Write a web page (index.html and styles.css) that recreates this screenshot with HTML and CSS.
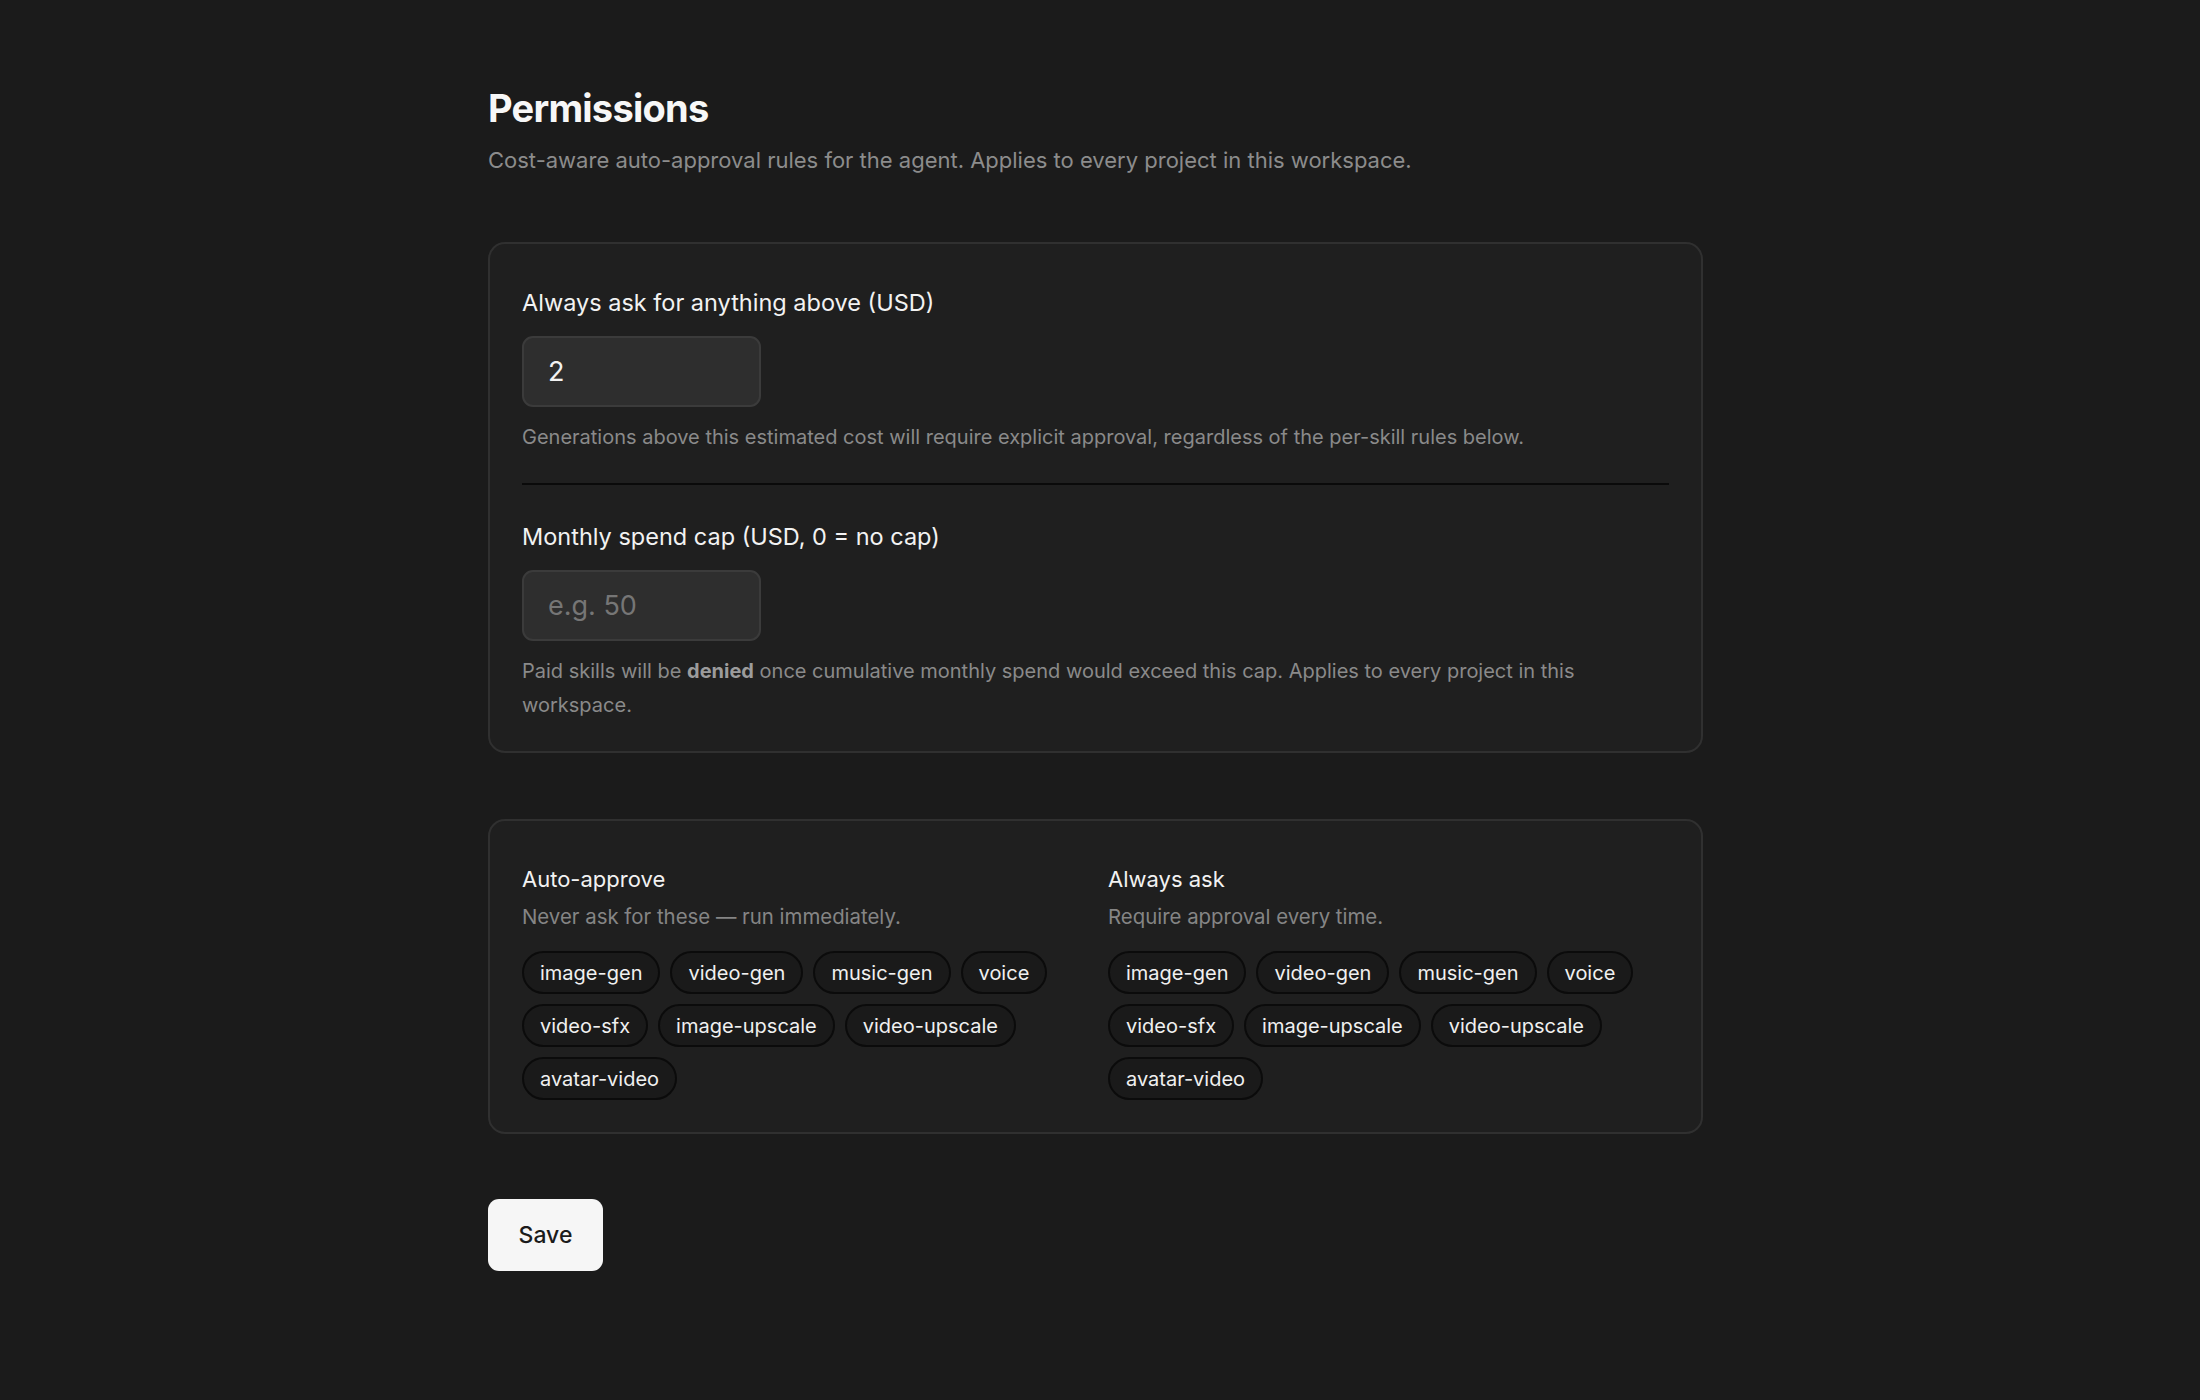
FILE: index.html
```html
<!DOCTYPE html>
<html lang="en">
  <head>
    <meta charset="UTF-8" />
    <meta name="viewport" content="width=device-width, initial-scale=1.0" />
    <title>Permissions</title>
    <link rel="stylesheet" href="styles.css">
  </head>
  <body>
    <main class="page">
      <h1 class="page__title">Permissions</h1>
      <p class="page__subtitle">
        Cost-aware auto-approval rules for the agent. Applies to every project in this workspace.
      </p>

      <section class="card card--limits">
        <div class="field">
          <label class="field__label" for="ask-above">Always ask for anything above (USD)</label>
          <input id="ask-above" class="field__input" type="text" value="2" />
          <p class="field__help">
            Generations above this estimated cost will require explicit approval, regardless of the per-skill rules below.
          </p>
        </div>

        <div class="divider"></div>

        <div class="field field--second">
          <label class="field__label" for="spend-cap">Monthly spend cap (USD, 0 = no cap)</label>
          <input id="spend-cap" class="field__input" type="text" placeholder="e.g. 50" />
          <p class="field__help">
            Paid skills will be <strong>denied</strong> once cumulative monthly spend would exceed this cap. Applies to every project in this workspace.
          </p>
        </div>
      </section>

      <section class="card card--rules">
        <div class="rule">
          <h2 class="rule__title">Auto-approve</h2>
          <p class="rule__desc">Never ask for these — run immediately.</p>
          <div class="chips">
            <span class="chip">image-gen</span>
            <span class="chip">video-gen</span>
            <span class="chip">music-gen</span>
            <span class="chip">voice</span>
            <span class="chip">video-sfx</span>
            <span class="chip">image-upscale</span>
            <span class="chip">video-upscale</span>
            <span class="chip">avatar-video</span>
          </div>
        </div>
        <div class="rule">
          <h2 class="rule__title">Always ask</h2>
          <p class="rule__desc">Require approval every time.</p>
          <div class="chips">
            <span class="chip">image-gen</span>
            <span class="chip">video-gen</span>
            <span class="chip">music-gen</span>
            <span class="chip">voice</span>
            <span class="chip">video-sfx</span>
            <span class="chip">image-upscale</span>
            <span class="chip">video-upscale</span>
            <span class="chip">avatar-video</span>
          </div>
        </div>
      </section>

      <button class="btn-save" type="button">Save</button>
    </main>
  </body>
</html>
```

FILE: styles.css
```css
* {
  padding: 0;
  margin: 0;
  box-sizing: border-box;
}

body {
  background-color: #1b1b1b;
  color: #f2f2f2;
  font-family: Inter, "Noto Sans", sans-serif;
  min-height: 100vh;
}

.page {
  width: 1215px;
  margin: 0 0 0 488px;
  padding: 85px 0 120px;
}

.page__title {
  font-size: 38px;
  line-height: 47px;
  font-weight: 700;
  letter-spacing: -0.02em;
  color: #f7f7f7;
}

.page__subtitle {
  margin-top: 12px;
  font-size: 22px;
  line-height: 32px;
  color: #8c8c8c;
}

.card {
  margin-top: 66px;
  background-color: #1f1f1f;
  border: 2px solid #303030;
  border-radius: 17px;
}

.card--limits {
  padding: 43px 32px 29px;
}

.field__label {
  display: block;
  font-size: 23.5px;
  line-height: 32px;
  color: #f2f2f2;
}

.field__input {
  display: block;
  margin-top: 17px;
  width: 239px;
  height: 71px;
  padding: 0 24px;
  background-color: #2e2e2e;
  border: 2px solid #3b3b3b;
  border-radius: 11px;
  color: #f2f2f2;
  font-family: inherit;
  font-size: 27px;
  outline: none;
}

.field__input::placeholder {
  color: #767676;
}

.field__help {
  margin-top: 13px;
  font-size: 20px;
  line-height: 34px;
  color: #8a8a8a;
}

.field__help strong {
  color: #9c9c9c;
  font-weight: 700;
}

.divider {
  margin-top: 29px;
  height: 2px;
  background-color: #0a0a0a;
}

.field--second {
  margin-top: 36px;
}

.card--rules {
  margin-top: 66px;
  padding: 42px 32px 32px;
  display: grid;
  grid-template-columns: 1fr 1fr;
  column-gap: 25px;
}

.rule__title {
  font-size: 22px;
  line-height: 32px;
  font-weight: 400;
  color: #f2f2f2;
}

.rule__desc {
  margin-top: 7px;
  font-size: 20.4px;
  line-height: 30px;
  color: #858585;
}

.chips {
  margin-top: 19px;
  display: flex;
  flex-wrap: wrap;
  gap: 10px;
}

.chip {
  display: inline-flex;
  align-items: center;
  height: 43px;
  padding: 0 16px;
  background-color: #1a1a1a;
  border: 2px solid #0b0b0b;
  border-radius: 22px;
  font-size: 20px;
  color: #f0f0f0;
}

.btn-save {
  display: block;
  margin-top: 65px;
  width: 115px;
  height: 72px;
  background-color: #f6f6f6;
  color: #1b1b1b;
  border: none;
  border-radius: 11px;
  font-family: inherit;
  font-size: 23px;
  font-weight: 500;
  cursor: pointer;
}
```
